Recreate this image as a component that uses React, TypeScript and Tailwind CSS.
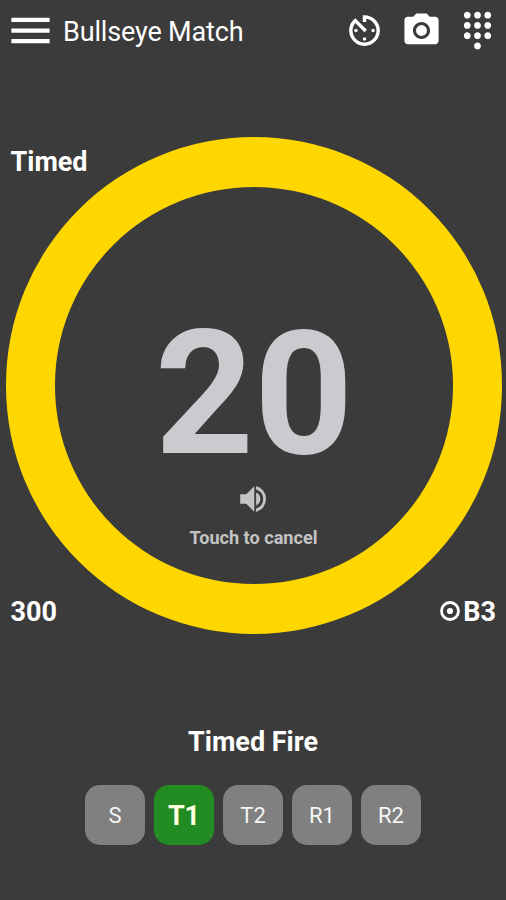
import { MdAvTimer, MdDialpad, MdMenu, MdPhotoCamera } from 'react-icons/md'
import clsx from 'clsx'

const ACTIONS = [
  { label: 'Timer', icon: MdAvTimer },
  { label: 'Camera', icon: MdPhotoCamera },
  { label: 'Keypad', icon: MdDialpad },
] as const

const STAGES = ['S', 'T1', 'T2', 'R1', 'R2'] as const

function Header() {
  return (
    <header className="flex h-[60px] shrink-0 items-center pl-[5px] pr-2">
      <button aria-label="Open menu">
        <MdMenu size={51} />
      </button>
      <h1 className="ml-[7px] flex-1 pt-[3px] text-[27px] leading-8 tracking-[-0.16px] whitespace-nowrap">Bullseye Match</h1>
      <div className="flex gap-[15.5px]">
        {ACTIONS.map(({ label, icon: Icon }) => (
          <button key={label} aria-label={label}>
            <Icon size={41} />
          </button>
        ))}
      </div>
    </header>
  )
}

function TargetIcon() {
  return (
    <svg width="22" height="22" viewBox="0 0 22 22" className="mb-[2px]" aria-hidden="true">
      <circle cx="11" cy="11" r="8.5" fill="none" stroke="currentColor" strokeWidth="2.8" />
      <circle cx="11" cy="11" r="3.1" fill="currentColor" />
    </svg>
  )
}

function SpeakerIcon() {
  return (
    <svg width="36" height="36" viewBox="0 0 24 24" fill="currentColor" className="-mt-[1px] text-[#c4c4c4]" aria-hidden="true">
      <path d="M2.8 8.8v6.400h4l5.400 5.300V3.500L6.800 8.800z" />
      <path d="M13.400 7.700v8.600a4.700 4.700 0 0 0 0-8.600z" />
      <path d="M13.400 3.400v2.200a6.700 6.700 0 0 1 0 12.800v2.200a8.900 8.900 0 0 0 0-17.200z" />
    </svg>
  )
}

export default function App() {
  const active = 'T1'

  return (
    <div className="flex h-[900px] w-[506px] flex-col overflow-hidden bg-[#3b3b3b] font-['Roboto',sans-serif] text-white">
      <Header />

      {/* Countdown ring with the corner labels in the same grid cell */}
      <main className="mt-[77px] grid h-[497px] shrink-0">
        <button className="col-start-1 row-start-1 ml-[6px] flex h-[497px] w-[496px] flex-col items-center rounded-full border-[50px] border-x-[49.5px] border-[#ffd700] text-[#cbcacf]">
          <span className="mt-[119px] text-[173px] leading-[176px] font-bold">20</span>
          <SpeakerIcon />
          <span className="mt-[9px] mr-[1px] text-[18.1px] leading-6 font-bold text-[#c4c4c4]">Touch to cancel</span>
        </button>
        <div className="pointer-events-none col-start-1 row-start-1 flex flex-col justify-between pt-[9px] pr-[10px] pb-[6px] pl-[10.5px] text-[27px] leading-8 font-bold">
          <div>Timed</div>
          <div className="flex items-center justify-between">
            <span>300</span>
            <span className="flex items-center gap-[2px]">
              <TargetIcon />
              B3
            </span>
          </div>
        </div>
      </main>

      <footer className="mt-[92px] flex flex-col items-center">
        <h2 className="text-[27px] leading-8 font-bold">Timed Fire</h2>
        <div className="mt-[27px] flex gap-[9px]">
          {STAGES.map((stage) => (
            <button
              key={stage}
              className={clsx(
                'flex size-[60px] items-center justify-center rounded-[15px]',
                stage === active
                  ? 'bg-[#228b22] pt-[3px] text-[27px] font-bold text-[#ffffe0]'
                  : 'bg-[#808080] pt-px text-[22px] text-[#f5f5f5]'
              )}
            >
              {stage}
            </button>
          ))}
        </div>
      </footer>
    </div>
  )
}
